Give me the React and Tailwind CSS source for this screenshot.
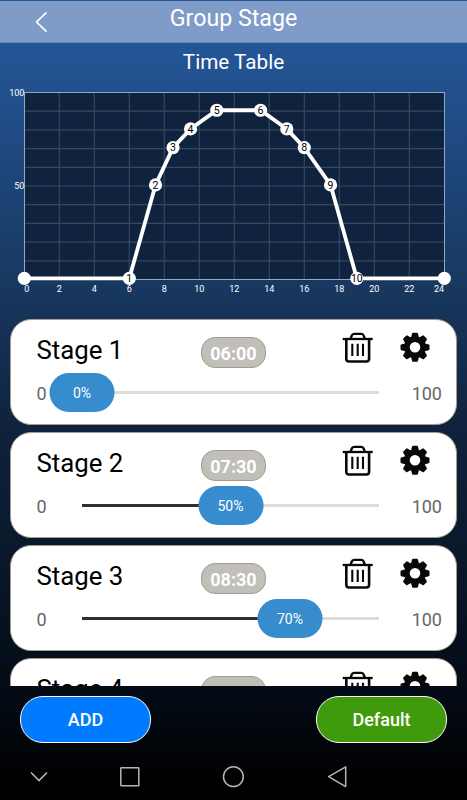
const points = [
  { hour: 0, value: 0, end: true },
  { hour: 6, value: 0 },
  { hour: 7.5, value: 50 },
  { hour: 8.5, value: 70 },
  { hour: 9.5, value: 80 },
  { hour: 11, value: 90 },
  { hour: 13.5, value: 90 },
  { hour: 15, value: 80 },
  { hour: 16, value: 70 },
  { hour: 17.5, value: 50 },
  { hour: 19, value: 0 },
  { hour: 24, value: 0, end: true },
]

const stages = [
  { name: 'Stage 1', time: '06:00', value: 0 },
  { name: 'Stage 2', time: '07:30', value: 50 },
  { name: 'Stage 3', time: '08:30', value: 70 },
  { name: 'Stage 4', time: '09:30', value: 80 },
]

const px = (hour) => 24.3 + hour * 17.5
const py = (value) => 198.3 - value * 1.867

function TimeChart() {
  const hours = [0, 2, 4, 6, 8, 10, 12, 14, 16, 18, 20, 22, 24]
  const labelX = (h) => (h === 0 ? 26.7 : h === 24 ? 439 : px(h))

  return (
    <svg className="block h-[220px] w-[467px] font-['Roboto',sans-serif]" viewBox="0 0 467 220">
      <rect x="24.5" y="12.5" width="420" height="187" fill="#10233e" />
      {hours.slice(1, -1).map((h) => (
        <line key={h} x1={px(h)} x2={px(h)} y1="13" y2="199" stroke="#34495f" strokeWidth="1.2" />
      ))}
      {[1, 2, 3, 4, 5, 6, 7, 8, 9].map((i) => (
        <line key={i} x1="25" x2="444" y1={12.5 + i * 18.7} y2={12.5 + i * 18.7} stroke="#34495f" strokeWidth="1.2" />
      ))}
      <rect x="24.5" y="12.5" width="420" height="187" fill="none" stroke="#90a8c6" />
      <g fill="#fff" fontSize="9">
        <text x="24.4" y="16" textAnchor="end">100</text>
        <text x="24.4" y="108.5" textAnchor="end">50</text>
        {hours.map((h) => (
          <text key={h} x={labelX(h)} y="211.5" textAnchor="middle">{h}</text>
        ))}
      </g>
      <polyline points={points.map((p) => `${px(p.hour)},${py(p.value)}`).join(' ')} fill="none" stroke="#fff" strokeWidth="3.8" />
      {points.map((p, i) => (
        <g key={i}>
          <circle cx={px(p.hour)} cy={py(p.value)} r="6.6" fill="#fff" />
          {!p.end && (
            <text x={px(p.hour)} y={py(p.value) + 3.7} textAnchor="middle" fontSize="10.5" fill="#000">{i}</text>
          )}
        </g>
      ))}
    </svg>
  )
}

function TrashIcon() {
  return (
    <svg className="h-[31px] w-[31px]" viewBox="0 0 31 31" fill="none" stroke="#080808">
      <path d="M.7 7h30" strokeWidth="2.3" />
      <path d="M8.7 6.5 9.7 3.7q.6-1.8 2.4-1.8h7.2q1.8 0 2.4 1.8l1 2.8" strokeWidth="2.4" />
      <path d="M4.3 7v19.7q0 2.8 2.8 2.8h17.2q2.8 0 2.8-2.8V7" strokeWidth="2.6" />
      <path d="M10.3 11.7V24M15.7 11.7V24M21 11.7V24" strokeWidth="2.1" />
    </svg>
  )
}

function GearIcon() {
  return (
    <svg className="h-[30px] w-[30px]" viewBox="-15 -15.3 30 30">
      <g fill="#080808">
        {[0, 45, 90, 135, 180, 225, 270, 315].map((a) => (
          <path key={a} transform={`rotate(${a})`} d="M-4.2-9-2.9-13.7Q-2.7-14.5-2-14.5H2Q2.7-14.5 2.9-13.7L4.2-9Z" />
        ))}
      </g>
      <circle r="8" fill="none" stroke="#080808" strokeWidth="5.4" />
    </svg>
  )
}

function Slider({ value }) {
  return (
    <div className="relative h-[3px] w-[297px] bg-[#dcdcdc]">
      <div className="h-full bg-[#303030]" style={{ width: `${value}%` }} />
      <div
        className="absolute top-[-18px] flex h-[39px] w-[65px] -translate-x-1/2 items-center justify-center rounded-[20px] bg-[#378ccd] pt-0.5 text-[14px] text-white"
        style={{ left: `${value}%` }}
      >
        {value}%
      </div>
    </div>
  )
}

function StageCard({ stage }) {
  return (
    <div className="h-[106px] shrink-0 rounded-[21px] border border-[#a79c8c] bg-white pr-[14px] pl-[25.5px]">
      <div className="flex h-[60px] items-start">
        <div className="w-[164.5px] pt-[14px] text-[25.8px] leading-8 text-black">{stage.name}</div>
        <div className="mt-[17px] flex h-[31px] w-[65px] items-center justify-center rounded-[14px] border border-[#a79c8c] bg-[#c0bfba] pt-px text-[18px] font-bold text-white">
          {stage.time}
        </div>
        <div className="mt-[12px] ml-[76px]"><TrashIcon /></div>
        <div className="mt-[12px] ml-[27px]"><GearIcon /></div>
      </div>
      <div className="flex h-[24px] items-center text-[18px] text-[#666]">
        <span className="w-[45.5px] pt-[3px]">0</span>
        <Slider value={stage.value} />
        <span className="flex-1 pt-[3px] text-right">100</span>
      </div>
    </div>
  )
}

export default function App() {
  return (
    <div className="flex h-[800px] w-[467px] flex-col overflow-hidden bg-[linear-gradient(180deg,#255a9b_0px,#235493_60px,#214c86_120px,#183961_280px,#10233f_420px,#081525_590px,#040b16_690px,#000_785px)] font-['Roboto',sans-serif]">
      <header className="mt-px grid h-[42px] grid-cols-[1fr_auto_1fr] items-start border-b border-[#6484b7] bg-[#7f9bc8]">
        <svg className="mt-[10px] ml-[35px] h-[22px] w-[14px]" viewBox="0 0 14 22" fill="none" stroke="#fff" strokeWidth="1.7">
          <path d="M11.5 1.3 1.6 11l9.9 9.7" />
        </svg>
        <h1 className="text-[23.2px] leading-[34px] text-white">Group Stage</h1>
      </header>

      <h2 className="h-[37px] text-center text-[20.7px] leading-[39px] text-white">Time Table</h2>
      <TimeChart />

      <main className="mt-[19px] flex h-[367px] shrink-0 flex-col gap-[7px] overflow-hidden px-[10px]">
        {stages.map((s) => (
          <StageCard key={s.name} stage={s} />
        ))}
      </main>

      <div className="flex justify-between px-[20px] pt-[10px]">
        <button className="h-[47px] w-[131px] rounded-[23px] border border-white bg-[#007aff] pt-px text-[18px] leading-6 font-medium text-white">ADD</button>
        <button className="h-[47px] w-[131px] rounded-[23px] border border-white bg-[#3f9b0b] pt-px text-[18px] leading-6 font-medium text-white">Default</button>
      </div>

      <nav className="mt-[22px] flex h-[24px] items-center pl-[30px]">
        <svg className="h-6 w-[18px]" viewBox="0 0 18 24" fill="none" stroke="#b5b5b5" strokeWidth="1.6">
          <path d="m1 7.5 8 8 8-8" />
        </svg>
        <svg className="ml-[71px] h-6 w-[22px]" viewBox="0 0 22 24" fill="none" stroke="#b5b5b5" strokeWidth="1.5">
          <rect x="1.8" y="2.8" width="18" height="18" rx=".5" />
        </svg>
        <svg className="ml-[81px] h-6 w-6" viewBox="0 0 24 24" fill="none" stroke="#b5b5b5" strokeWidth="1.5">
          <circle cx="11.4" cy="11.7" r="9.9" />
        </svg>
        <svg className="ml-[80px] h-6 w-6" viewBox="0 0 24 24" fill="none" stroke="#b5b5b5" strokeWidth="1.5" strokeLinejoin="round">
          <path d="M19.7 1.8v19.8L2.6 11.7Z" />
        </svg>
      </nav>
    </div>
  )
}
